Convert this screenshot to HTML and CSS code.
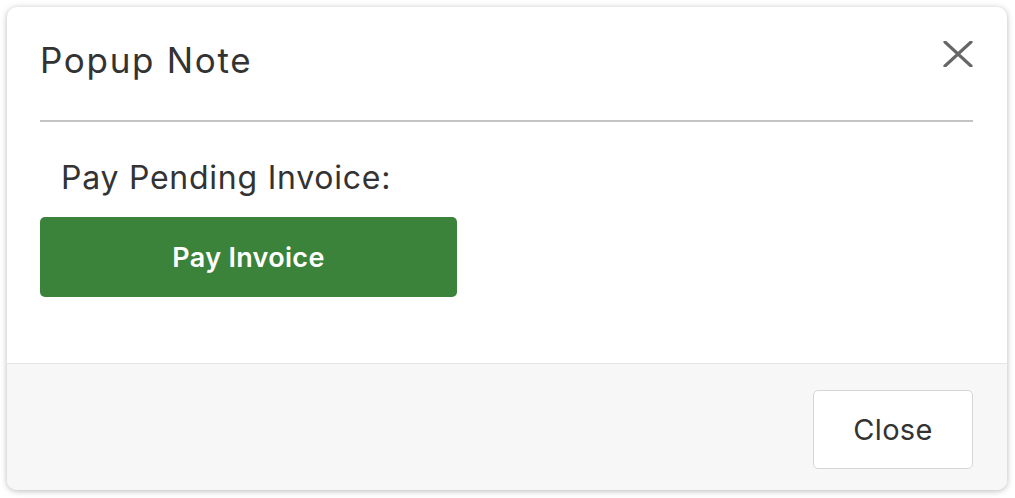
FILE: index.html
```html
<!DOCTYPE html>
<html lang="en">
<head>
    <meta charset="UTF-8">
    <meta name="viewport" content="width=device-width, initial-scale=1.0">
    <title>Popup Note</title>
    <link rel="stylesheet" href="styles.css">
</head>
<body>
    <div class="modal">
        <div class="modal-header">
            <div class="modal-title">Popup Note</div>
            <button class="close-icon" aria-label="Close">
                <svg width="30" height="26" viewBox="0 0 30 26">
                    <path d="M2 1 L28 25 M28 1 L2 25" stroke="#666666" stroke-width="3.2" stroke-linecap="round" fill="none"/>
                </svg>
            </button>
        </div>

        <div class="modal-body">
            <div class="note-label">Pay Pending Invoice:</div>
            <button class="pay-button">Pay Invoice</button>
        </div>

        <div class="modal-footer">
            <button class="close-button">Close</button>
        </div>
    </div>
</body>
</html>
```

FILE: styles.css
```css
* {
    margin: 0;
    padding: 0;
    box-sizing: border-box;
}

body {
    font-family: "Inter", "Liberation Sans", sans-serif;
    background-color: #ffffff;
    color: #333333;
    width: 1015px;
    height: 498px;
    padding: 7px 8px 8px 7px;
}

.modal {
    width: 1000px;
    height: 483px;
    background-color: #ffffff;
    border-radius: 10px;
    box-shadow: 0 1px 6px rgba(0, 0, 0, 0.28);
    display: flex;
    flex-direction: column;
    overflow: hidden;
}

/* Header: title and the X, with a rule under them */
.modal-header {
    height: 115px;
    margin: 0 34px 0 33px;
    border-bottom: 2px solid #c4c4c4;
    display: flex;
    justify-content: space-between;
    align-items: center;
    padding-bottom: 7px;
}

.modal-title {
    font-size: 35px;
    letter-spacing: 1.7px;
    color: #333333;
}

.close-icon {
    background: none;
    border: none;
    width: 30px;
    height: 26px;
    margin-top: -12px;
    cursor: pointer;
}

.modal-body {
    flex: 1;
    padding: 36px 33px 0 33px;
}

.note-label {
    font-size: 32px;
    letter-spacing: 0.75px;
    color: #333333;
    padding-left: 21px;
    line-height: 40px;
}

.pay-button {
    margin-top: 19px;
    width: 417px;
    height: 80px;
    background-color: #3b823a;
    color: #ffffff;
    border: none;
    border-radius: 5px;
    font-family: inherit;
    font-size: 27px;
    font-weight: 600;
    letter-spacing: 0.3px;
    cursor: pointer;
}

.modal-footer {
    height: 127px;
    background-color: #f7f7f7;
    border-top: 1px solid #e6e6e6;
    display: flex;
    justify-content: flex-end;
    padding: 26px 34px 0 0;
}

.close-button {
    width: 160px;
    height: 79px;
    background-color: #ffffff;
    border: 1px solid #d6d6d6;
    border-radius: 5px;
    font-family: inherit;
    font-size: 29px;
    letter-spacing: 0.3px;
    color: #333333;
    cursor: pointer;
}
```
